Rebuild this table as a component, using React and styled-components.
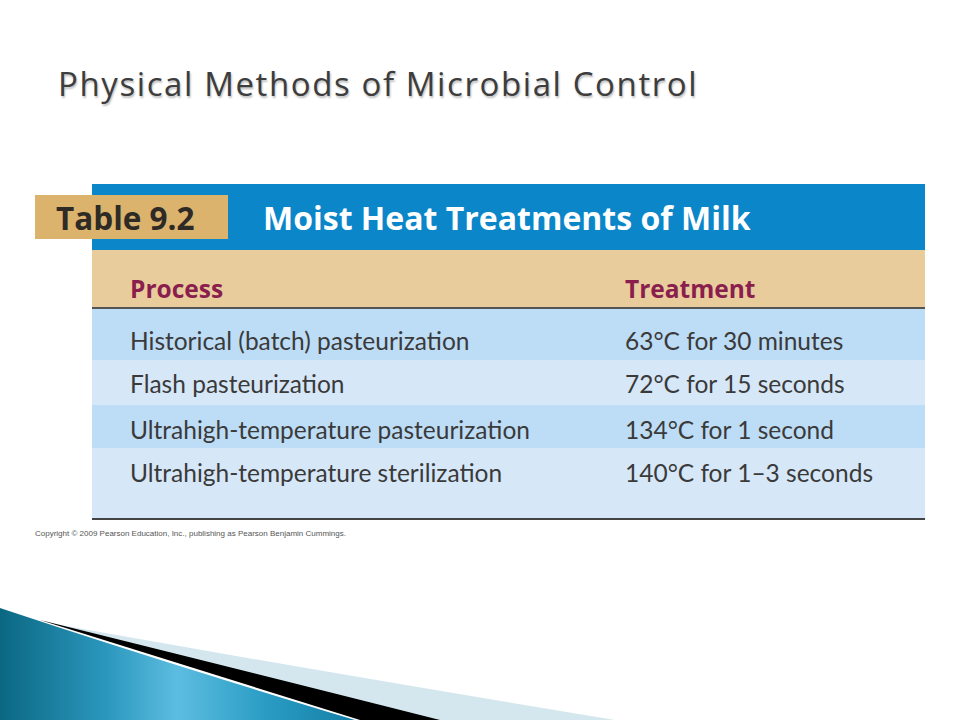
import React from 'react';
import styled, { createGlobalStyle } from 'styled-components';

const GlobalStyle = createGlobalStyle`
  body {
    margin: 0;
    background: #fff;
    font-family: 'Lato', 'Liberation Sans', sans-serif;
  }
`;

const Slide = styled.div`
  width: 960px;
  height: 720px;
  background: #fff;
  display: flex;
  flex-direction: column;
  overflow: hidden;
`;

const Title = styled.h1`
  margin: 62px 0 0 58px;
  font-family: 'Open Sans', sans-serif;
  font-weight: 400;
  font-size: 33px;
  line-height: 44px;
  color: #3d3d3d;
  letter-spacing: 1.6px;
  text-shadow: 1px 2px 2px rgba(0, 0, 0, 0.25);
`;

const Table = styled.div`
  margin: 78px 0 0 92px;
  width: 833px;
  display: flex;
  flex-direction: column;
  border-bottom: 2px solid #444;
`;

const Banner = styled.div`
  height: 66px;
  background: #0a86c9;
  display: flex;
  align-items: center;
`;

const Tab = styled.div`
  margin-left: -57px;
  width: 193px;
  height: 44px;
  background: #dcb36d;
  display: flex;
  align-items: center;
  padding-left: 21px;
  box-sizing: border-box;
  font-family: 'Open Sans', sans-serif;
  font-weight: 700;
  font-size: 31.5px;
  color: #2e2a26;
`;

const BannerTitle = styled.div`
  margin-left: 35px;
  font-family: 'Open Sans', sans-serif;
  font-weight: 700;
  font-size: 32px;
  color: #fff;
`;

const Row = styled.div`
  display: grid;
  grid-template-columns: 495px 1fr;
  height: ${p => p.h}px;
  box-sizing: border-box;
  padding: ${p => p.pt}px 0 0 38px;
  background: ${p => p.bg};
  border-bottom: ${p => (p.rule ? '2px solid #555' : 'none')};
`;

const HeadCell = styled.div`
  font-family: 'Open Sans', sans-serif;
  font-weight: 700;
  font-size: 24.5px;
  line-height: 28px;
  color: #8a1f4e;
`;

const Cell = styled.div`
  font-family: 'Lato', sans-serif;
  font-size: 24.5px;
  line-height: 28px;
  color: #3a3a3a;
`;

const Copyright = styled.div`
  margin: 9px 0 0 35px;
  font-family: 'Liberation Sans', Arial, sans-serif;
  font-size: 8px;
  color: #555;
`;

const Swoosh = styled.svg`
  margin-top: auto;
  display: block;
  flex-shrink: 0;
`;

const rows = [
  ['Historical (batch) pasteurization', '63°C for 30 minutes', '#bddcf5', 51, 18],
  ['Flash pasteurization', '72°C for 15 seconds', '#d6e7f8', 45, 10],
  ['Ultrahigh-temperature pasteurization', '134°C for 1 second', '#bddcf5', 43, 11],
  ['Ultrahigh-temperature sterilization', '140°C for 1–3 seconds', '#d6e7f8', 70, 11],
];

const App = () => (
  <>
    <GlobalStyle />
    <Slide>
      <Title>Physical Methods of Microbial Control</Title>
      <Table>
        <Banner>
          <Tab>Table 9.2</Tab>
          <BannerTitle>Moist Heat Treatments of Milk</BannerTitle>
        </Banner>
        <Row h={59} pt={25} bg="#e9cc9c" rule>
          <HeadCell>Process</HeadCell>
          <HeadCell>Treatment</HeadCell>
        </Row>
        {rows.map(([a, b, bg, h, pt]) => (
          <Row key={a} h={h} pt={pt} bg={bg}>
            <Cell>{a}</Cell>
            <Cell>{b}</Cell>
          </Row>
        ))}
      </Table>
      <Copyright>
        Copyright © 2009 Pearson Education, Inc., publishing as Pearson Benjamin Cummings.
      </Copyright>
      <Swoosh width="960" height="130" viewBox="0 0 960 130">
        <defs>
          <linearGradient id="blue" x1="0" y1="0" x2="1" y2="0">
            <stop offset="0" stopColor="#0b6883" />
            <stop offset="0.3" stopColor="#2b97bd" />
            <stop offset="0.5" stopColor="#5cbde0" />
            <stop offset="0.75" stopColor="#2a9cc4" />
            <stop offset="1" stopColor="#137fa6" />
          </linearGradient>
        </defs>
        <path d="M55 34 Q300 78 615 130 L430 130 Z" fill="#d4e7ef" />
        <path d="M40 30 Q250 82 440 130 L360 130 Z" fill="#000" />
        <path d="M0 18 Q150 68 355 130 L0 130 Z" fill="url(#blue)" />
      </Swoosh>
    </Slide>
  </>
);

export default App;
